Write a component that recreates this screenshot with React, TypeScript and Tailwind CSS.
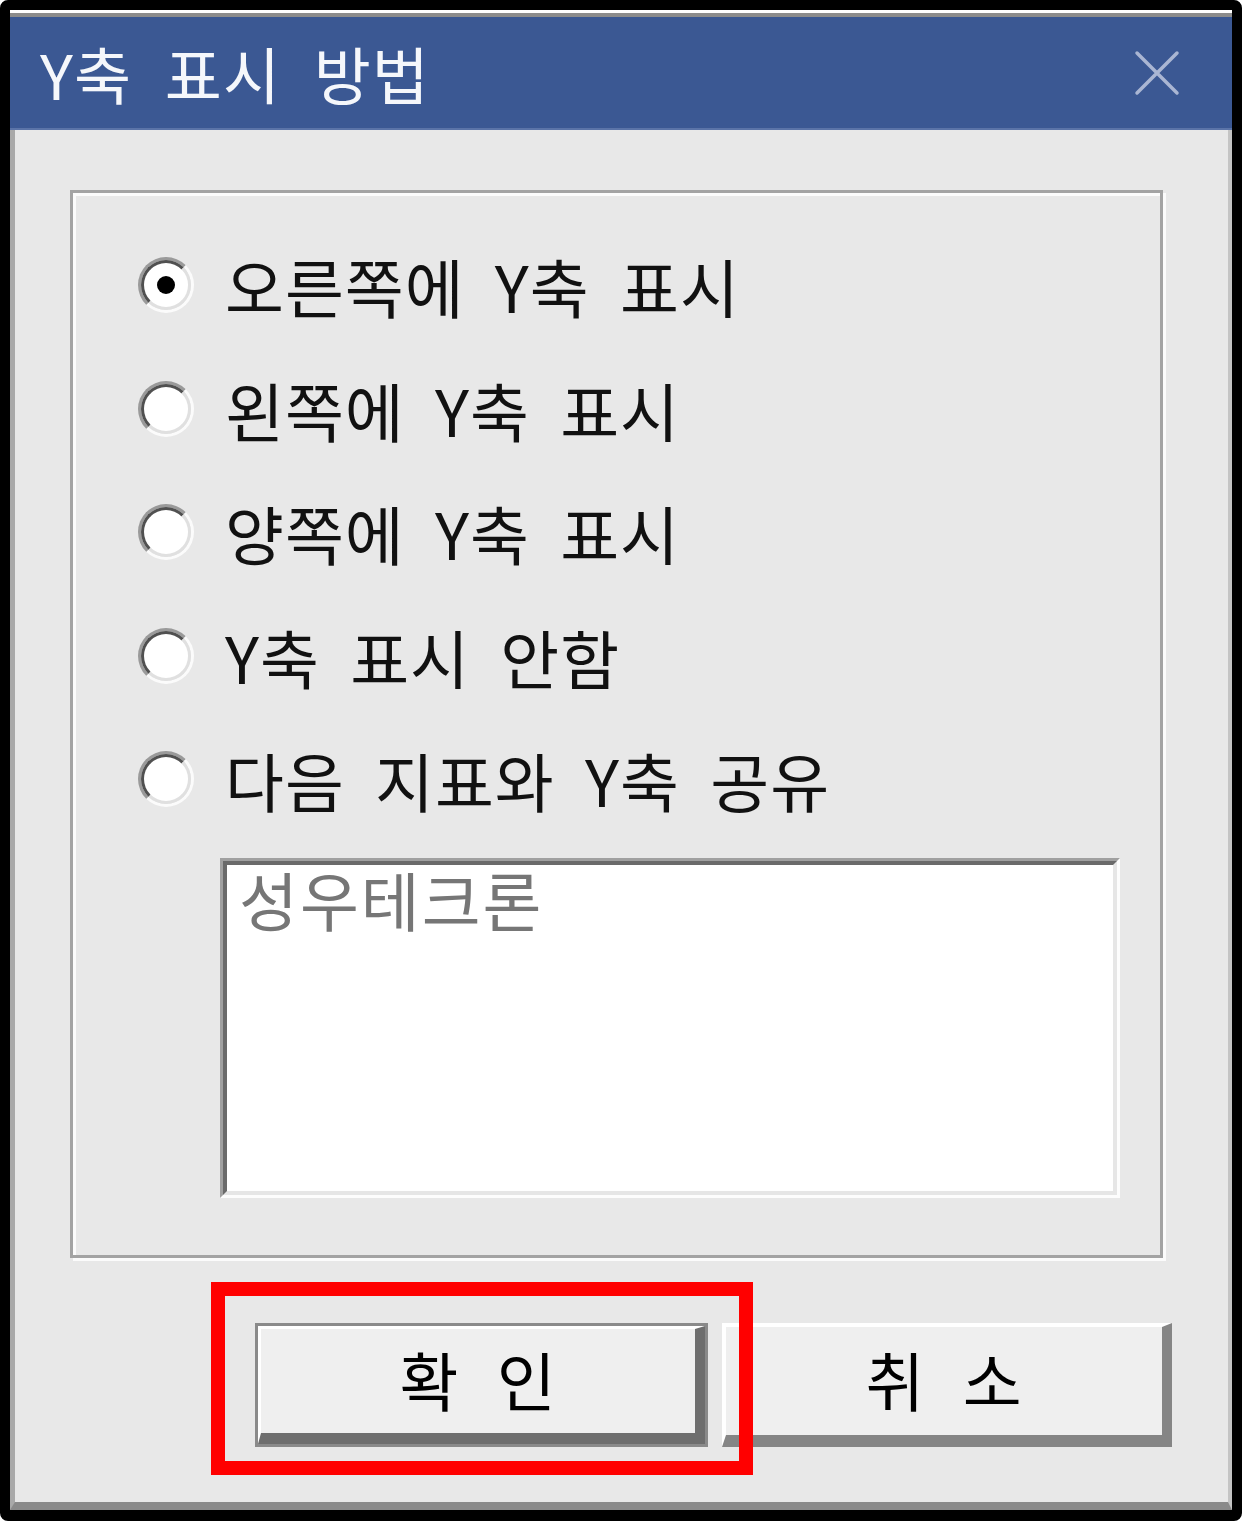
import React from 'react';

const options = [
  '오른쪽에 Y축 표시',
  '왼쪽에 Y축 표시',
  '양쪽에 Y축 표시',
  'Y축 표시 안함',
  '다음 지표와 Y축 공유',
];

const Radio: React.FC<{ checked?: boolean }> = ({ checked }) => (
  <span className="w-[56px] h-[56px] shrink-0 rounded-full border-[3px] border-t-[#9a9a9a] border-l-[#9a9a9a] border-r-[#fbfbfb] border-b-[#fbfbfb] flex">
    <span className="w-full h-full rounded-full border-[3px] border-t-[#505050] border-l-[#505050] border-r-[#e0e0e0] border-b-[#e0e0e0] bg-white flex items-center justify-center">
      {checked && <span className="w-[18px] h-[18px] rounded-full bg-black" />}
    </span>
  </span>
);

const App: React.FC = () => {
  const selected = 0;

  return (
    <div
      className="relative w-[1242px] h-[1521px] bg-white overflow-hidden [word-spacing:15px]"
      style={{ fontFamily: '"Noto Sans CJK KR", "Noto Sans", sans-serif' }}
    >
      <div className="w-full h-full flex flex-col bg-[#e8e8e8] border-black border-t-[10px] border-l-[10px] border-r-[10px] border-b-[11px] rounded-[8px]">
        {/* window frame top */}
        <div className="h-[3px] bg-white" />
        <div className="h-[4px] bg-[#8c8c8c]" />

        {/* title bar */}
        <div className="h-[113px] bg-[#3b5893] flex items-center justify-between pl-[30px] pr-[52px] border-b-[2px] border-b-[#5b74a8]">
          <span className="text-[62px] leading-none tracking-[1px] [word-spacing:18px] text-[#f5f7fb] whitespace-pre">Y축 표시 방법</span>
          <svg width="46" height="46" viewBox="0 0 46 46">
            <path d="M3 3 L43 43 M43 3 L3 43" stroke="#aab6d3" strokeWidth="3.5" strokeLinecap="round" />
          </svg>
        </div>

        {/* body */}
        <div className="flex-1 flex flex-col border-l-[5px] border-l-[#a9a9a9] border-r-[4px] border-r-[#c4c4c4] border-b-[8px] border-b-[#8a8a8a]">
          {/* group box */}
          <div className="ml-[55px] mt-[60px] w-[1093px] h-[1068px] border-[3px] border-[#a3a3a3] shadow-[inset_3px_3px_0_#fbfbfb,3px_3px_0_#fbfbfb] flex flex-col">
            <div className="pt-[62px] pl-[65px] flex flex-col gap-[63.5px]">
              {options.map((label, i) => (
                <div key={label} className="h-[60px] flex items-center gap-[31px]">
                  <Radio checked={i === selected} />
                  <span className="text-[64px] leading-none tracking-[1px] text-[#111] whitespace-pre">{label}</span>
                </div>
              ))}
            </div>

            {/* list box */}
            <div className="ml-[147px] mt-[49px] w-[900px] h-[340px] border-[3px] border-t-[#a0a0a0] border-l-[#a0a0a0] border-r-[#fdfdfd] border-b-[#fdfdfd]">
              <div className="w-full h-full bg-white border-[4px] border-t-[#6a6a6a] border-l-[#6a6a6a] border-r-[#e6e6e6] border-b-[#e6e6e6] pl-[12px] pt-[1px]">
                <span className="block text-[64px] leading-none tracking-[2px] text-[#767676]">성우테크론</span>
              </div>
            </div>
          </div>

          {/* buttons */}
          <div className="ml-[240px] mt-[65px] flex gap-[14px]">
            <button className="w-[453px] h-[124px] border-[3px] border-[#8a8a8a] bg-[#efefef] flex">
              <span className="w-full h-full flex items-center justify-center pb-[6px] border-t-[3px] border-l-[3px] border-t-white border-l-white border-r-[10px] border-b-[11px] border-r-[#6e6e6e] border-b-[#6e6e6e] text-[64px] leading-none tracking-[1px] [word-spacing:22px] text-black whitespace-pre">
                확 인
              </span>
            </button>
            <button className="w-[450px] h-[124px] bg-[#efefef] flex">
              <span className="w-full h-full flex items-center justify-center pb-[6px] border-t-[4px] border-l-[4px] border-t-white border-l-white border-r-[10px] border-b-[12px] border-r-[#858585] border-b-[#858585] text-[64px] leading-none tracking-[1px] [word-spacing:22px] text-black whitespace-pre">
                취 소
              </span>
            </button>
          </div>
        </div>
      </div>

      {/* highlight frame */}
      <div className="absolute left-[211px] top-[1282px] w-[542px] h-[193px] border-[14px] border-[#ff0000]" />
    </div>
  );
};

export default App;
